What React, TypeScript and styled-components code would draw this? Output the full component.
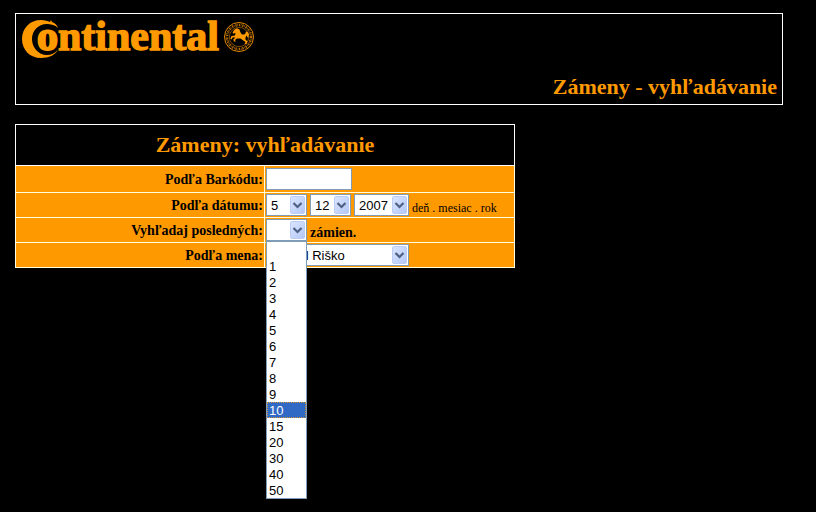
import React, { useState } from "react";
import styled, { createGlobalStyle } from "styled-components";

const ORANGE = "#ff9900";
const EDGE = "#7f9db9";

const GlobalStyle = createGlobalStyle`
  *, *::before, *::after { box-sizing: border-box; }
  body {
    margin: 0;
    background: #000;
    font-family: "Liberation Serif", "Times New Roman", serif;
  }
`;

const Page = styled.main`
  display: flex;
  flex-direction: column;
  align-items: flex-start;
  gap: 19px;
  min-height: 100vh;
  padding: 13px 33px 13px 15px;
`;

const Banner = styled.header`
  display: flex;
  flex-direction: column;
  gap: 15px;
  width: 100%;
  padding: 5px 5px 4px;
  border: 1px solid #fff;
`;

const Logo = styled.svg`
  display: block;
  width: 236px;
  height: 40px;
  overflow: visible;
`;

const Title = styled.h1`
  margin: 0;
  color: ${ORANGE};
  font-size: 22px;
  line-height: 26px;
  text-align: right;
`;

const SearchTable = styled.table`
  width: 500px;
  max-width: 100%;
  border-collapse: collapse;
  table-layout: fixed;
  color: #000;
  font-size: 14px;
`;

const LabelColumn = styled.col`
  width: 249px;
`;

const Heading = styled.th`
  height: 41px;
  padding: 0;
  border: 1px solid #fff;
  color: ${ORANGE};
  font-size: 22px;
  line-height: 26px;
`;

const Row = styled.tr<{ $tall?: boolean }>`
  height: ${(p) => (p.$tall ? 27 : 25)}px;
  background: ${ORANGE};
`;

const LabelCell = styled.th`
  padding: 2px 1px 0;
  border: 1px solid #ffffe0;
  line-height: 16px;
  text-align: right;
`;

const FieldCell = styled.td`
  padding: 0 1px;
  border: 1px solid #ffffe0;
`;

const Fields = styled.div`
  display: flex;
  align-items: center;
  gap: 3px;
`;

const TextBox = styled.input`
  width: 86px;
  height: 22px;
  padding: 0 4px;
  border: 1px solid ${EDGE};
  background: #fff;
  font: 13px "Liberation Sans", Arial, sans-serif;
`;

const SelectBox = styled.div<{ $width: number }>`
  position: relative;
  width: ${(p) => p.$width}px;
  height: 22px;
`;

const NativeSelect = styled.select`
  appearance: none;
  display: block;
  width: 100%;
  height: 100%;
  padding: 0 18px 0 4px;
  border: 1px solid ${EDGE};
  border-radius: 0;
  background: #fff;
  color: #000;
  font: 13px "Liberation Sans", Arial, sans-serif;
`;

const Arrow = styled.svg`
  position: absolute;
  top: 2px;
  right: 2px;
  width: 15px;
  height: 18px;
  pointer-events: none;
`;

const Options = styled.ul`
  position: absolute;
  z-index: 1;
  top: 100%;
  left: 0;
  width: 100%;
  margin: 0;
  padding: 0;
  border: 1px solid ${EDGE};
  background: #fff;
  list-style: none;
`;

const Option = styled.li<{ $active: boolean }>`
  height: 16px;
  padding: 1px 2px 0;
  background: ${(p) => (p.$active ? "#316ac5" : "#fff")};
  color: ${(p) => (p.$active ? "#fff" : "#000")};
  outline: ${(p) => (p.$active ? "1px dotted #ce953a" : "none")};
  outline-offset: -1px;
  font: 13px/15px "Liberation Sans", Arial, sans-serif;
  cursor: default;
`;

const Hint = styled.span`
  padding-top: 5px;
  font-size: 12px;
  line-height: 14px;
`;

const Unit = styled.strong`
  padding-top: 5px;
  line-height: 16px;
`;

const COUNTS = ["", "1", "2", "3", "4", "5", "6", "7", "8", "9", "10", "15", "20", "30", "40", "50"];

function DropArrow() {
  return (
    <Arrow viewBox="0 0 15 18" aria-hidden="true">
      <defs>
        <linearGradient id="arrow-face" x1="0" y1="0" x2="1" y2="1">
          <stop offset="0" stopColor="#dbe5fe" />
          <stop offset="1" stopColor="#b3c7f6" />
        </linearGradient>
      </defs>
      <rect x="0.5" y="0.5" width="14" height="17" rx="1.5" fill="url(#arrow-face)" stroke="#bccdf5" />
      <path d="M3.5 7 7.5 11 11.5 7" fill="none" stroke="#4d6185" strokeWidth="2.2" />
    </Arrow>
  );
}

function Select({ id, label, width, value, children }: {
  id: string;
  label?: string;
  width: number;
  value: string;
  children?: React.ReactNode;
}) {
  return (
    <SelectBox $width={width}>
      <NativeSelect id={id} aria-label={label} defaultValue={value}>
        <option value={value}>{value}</option>
      </NativeSelect>
      <DropArrow />
      {children}
    </SelectBox>
  );
}

function CountOptions() {
  const [active, setActive] = useState("10");
  return (
    <Options role="listbox" aria-label="Počet zámien">
      {COUNTS.map((n) => (
        <Option
          key={n}
          role="option"
          aria-selected={n === active}
          $active={n === active}
          onMouseEnter={() => setActive(n)}
        >
          {n}
        </Option>
      ))}
    </Options>
  );
}

function ContinentalLogo() {
  return (
    <Logo viewBox="0 0 236 40" role="img" aria-label="Continental">
      <path
        fill={ORANGE}
        d="M30 1 31 3C34 4 36 6 37 9C34 6 30 5 26 5C17 5 11 12 11 20C11 28 17 36 26 36C30 36 34 34 37 31C34 36 28 39 20 39C9 39 1 31 1 20C1 9 9 1 20 1C24 1 27 2 29 3Z"
      />
      <text
        x="16"
        y="31"
        fill={ORANGE}
        stroke={ORANGE}
        fontFamily="Liberation Serif, Times New Roman, serif"
        fontWeight="700"
        fontSize="42"
      >
        <tspan strokeWidth="2">o</tspan>
        <tspan strokeWidth="1.4">ntinental</tspan>
      </text>
      <g fill="none" stroke={ORANGE}>
        <circle cx="218" cy="18" r="14.5" strokeWidth="0.9" />
        <circle cx="218" cy="18" r="12" strokeWidth="2.6" strokeDasharray="1.3 0.7 0.6 0.9" opacity="0.7" />
        <circle cx="218" cy="18" r="9.7" strokeWidth="0.5" />
      </g>
      <path
        fill={ORANGE}
        d="M211.5 13.5 213.5 10.5 216 9.2 218.5 10.5 219.5 13.5 221 15.5 224 15.2 225 12.5 227 13 228 15.5 227 19 225.5 16.5 224.5 18.5 224.5 21 226.5 22 225.5 25 223.5 25 224.5 23 221.5 21 219.5 19.5 216 19.5 214 21 214.8 22.5 213 22.5 212.3 20.5 214.5 18.5 211.5 18.5 210.5 20.5 209.3 19.5 210.5 17 214 16.5 214.5 13.8 212.5 14.8Z"
      />
    </Logo>
  );
}

export default function App() {
  return (
    <>
      <GlobalStyle />
      <Page>
        <Banner>
          <ContinentalLogo />
          <Title>Zámeny - vyhľadávanie</Title>
        </Banner>
        <SearchTable>
          <colgroup>
            <LabelColumn />
            <col />
          </colgroup>
          <thead>
            <tr>
              <Heading colSpan={2}>Zámeny: vyhľadávanie</Heading>
            </tr>
          </thead>
          <tbody>
            <Row $tall>
              <LabelCell scope="row"><label htmlFor="barcode">Podľa Barkódu:</label></LabelCell>
              <FieldCell><Fields><TextBox id="barcode" type="text" /></Fields></FieldCell>
            </Row>
            <Row>
              <LabelCell scope="row"><label htmlFor="day">Podľa dátumu:</label></LabelCell>
              <FieldCell>
                <Fields>
                  <Select id="day" width={41} value="5" />
                  <Select id="month" label="mesiac" width={41} value="12" />
                  <Select id="year" label="rok" width={55} value="2007" />
                  <Hint>deň . mesiac . rok</Hint>
                </Fields>
              </FieldCell>
            </Row>
            <Row>
              <LabelCell scope="row"><label htmlFor="count">Vyhľadaj posledných:</label></LabelCell>
              <FieldCell>
                <Fields>
                  <Select id="count" width={41} value=""><CountOptions /></Select>
                  <Unit>zámien.</Unit>
                </Fields>
              </FieldCell>
            </Row>
            <Row>
              <LabelCell scope="row"><label htmlFor="name">Podľa mena:</label></LabelCell>
              <FieldCell><Fields><Select id="name" width={143} value="Michal Riško" /></Fields></FieldCell>
            </Row>
          </tbody>
        </SearchTable>
      </Page>
    </>
  );
}
